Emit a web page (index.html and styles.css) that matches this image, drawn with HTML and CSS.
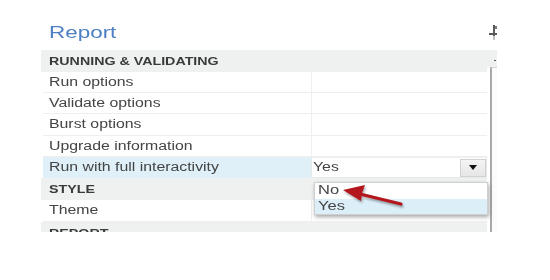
FILE: index.html
```html
<!DOCTYPE html>
<html>
<head>
<meta charset="utf-8">
<link rel="stylesheet" href="styles.css">
</head>
<body>
<div class="page">
  <div class="titlebar">
    <span class="title"><span class="sx">Report</span></span>
    <svg class="pin" width="8" height="17" viewBox="0 0 8 17">
      <rect x="4" y="1" width="2" height="11" fill="#5a5a5a"/>
      <rect x="0" y="9" width="8" height="2" fill="#5a5a5a"/>
      <rect x="6" y="2" width="2" height="3" fill="#7a7a7a"/>
      <rect x="4.5" y="12" width="1" height="4" fill="#8a8a8a"/>
    </svg>
  </div>
  <div class="panel">
    <div class="list">
      <div class="section"><span class="sx">RUNNING &amp; VALIDATING</span></div>
      <div class="row"><div class="label"><span class="sx">Run options</span></div><div class="value"></div></div>
      <div class="row"><div class="label"><span class="sx">Validate options</span></div><div class="value"></div></div>
      <div class="row"><div class="label"><span class="sx">Burst options</span></div><div class="value"></div></div>
      <div class="row"><div class="label"><span class="sx">Upgrade information</span></div><div class="value"></div></div>
      <div class="row active">
        <div class="label"><span class="sx">Run with full interactivity</span></div>
        <div class="value select">
          <span class="sx">Yes</span>
          <span class="btn"><svg width="8" height="5" viewBox="0 0 8 5"><path d="M0 0H8L4 5Z" fill="#111"/></svg></span>
        </div>
      </div>
      <div class="section"><span class="sx">STYLE</span></div>
      <div class="row"><div class="label"><span class="sx">Theme</span></div><div class="value"></div></div>
      <div class="section"><span class="sx">REPORT</span></div>
    </div>
    <div class="scroll">
      <div class="sb-btn"><span class="dash"></span></div>
      <div class="thumb"></div>
    </div>
  </div>
  <div class="dropdown">
    <div class="opt"><span class="sx">No</span></div>
    <div class="opt hl"><span class="sx">Yes</span></div>
  </div>
  <svg class="arrow" width="70" height="32" viewBox="0 0 70 32">
    <path d="M21 14 L62 24" stroke="#b3161c" stroke-width="3.2" stroke-linecap="round" fill="none"/>
    <path d="M4 10 L26 5 L23 13 L22 21 Z" fill="#b3161c"/>
  </svg>
</div>
</body>
</html>
```

FILE: styles.css
```css
html, body {
  margin: 0;
  padding: 0;
  background: #ffffff;
}

body {
  font-family: "Liberation Sans", Arial, sans-serif;
  color: #444444;
}

.page {
  position: relative;
  width: 550px;
  height: 280px;
  padding: 23px 0 0 41px;
  box-sizing: border-box;
  overflow: hidden;
}

.sx {
  display: inline-block;
  white-space: nowrap;
  transform: scaleX(1.32);
  transform-origin: 0 50%;
}

.titlebar {
  width: 456px;
  height: 20px;
  display: flex;
  justify-content: space-between;
  align-items: flex-start;
  margin-bottom: 6.5px;
}

.title {
  padding-left: 8px;
  font-size: 17px;
  line-height: 20px;
  color: #4c7fc3;
}

.pin {
  display: block;
  margin-top: 1px;
}

.panel {
  width: 456px;
  height: 182.5px;
  display: grid;
  grid-template-columns: 446px 10px;
  overflow: hidden;
}

.list {
  display: flex;
  flex-direction: column;
}

.section {
  flex: none;
  height: 22.5px;
  line-height: 22.5px;
  padding-left: 8px;
  background: #eff1f1;
  font-size: 10.8px;
  font-weight: bold;
  color: #3a3a3a;
}

.row {
  flex: none;
  height: 21.2px;
  margin-left: 2px;
  display: grid;
  grid-template-columns: 268px 176px;
  box-sizing: border-box;
  border-bottom: 1px solid #eef0f0;
  font-size: 12px;
  line-height: 20.2px;
}

.label {
  padding-left: 6px;
}

.value {
  border-left: 1px solid #eef0f0;
}

.row.active {
  border-bottom-color: #ffffff;
}

.row.active .label {
  background: #dff0f8;
}

.select {
  display: flex;
  justify-content: space-between;
  align-items: flex-start;
  padding-left: 1px;
  background: #ffffff;
  border: 1px solid #e6e8e8;
  border-top-color: #eef0f0;
  box-sizing: border-box;
  height: 21.2px;
  line-height: 19px;
}

.btn {
  width: 26px;
  height: 18px;
  margin-top: 1px;
  box-sizing: border-box;
  border: 1px solid #d2d2d2;
  background: linear-gradient(#f4f4f4, #e6e6e6);
  display: flex;
  align-items: center;
  justify-content: center;
}

.btn svg {
  display: block;
}

.scroll {
  display: flex;
  flex-direction: column;
}

.sb-btn {
  height: 17.5px;
  background: #eff1f1;
  position: relative;
  display: flex;
  justify-content: flex-end;
  align-items: flex-start;
}

.dash {
  width: 2px;
  height: 1px;
  margin: 10px 1px 0 0;
  background: #555555;
}

.thumb {
  flex: 1;
  margin-left: 3px;
  border-left: 2px solid #a9a9a9;
  border-top: 1px solid #d2d2d2;
  background: #fbfbfb;
}

.dropdown {
  position: absolute;
  left: 314px;
  top: 182px;
  width: 174px;
  box-sizing: border-box;
  border: 1px solid #cfcfcf;
  background: #ffffff;
  box-shadow: 1px 2px 4px rgba(0, 0, 0, 0.35);
  font-size: 12.5px;
  color: #444444;
}

.opt {
  height: 15.5px;
  line-height: 15.5px;
  padding-left: 3px;
}

.opt.hl {
  background: #dceef7;
}

.arrow {
  position: absolute;
  left: 339px;
  top: 180px;
  filter: drop-shadow(1px 2px 1px rgba(0, 0, 0, 0.35));
}
```
